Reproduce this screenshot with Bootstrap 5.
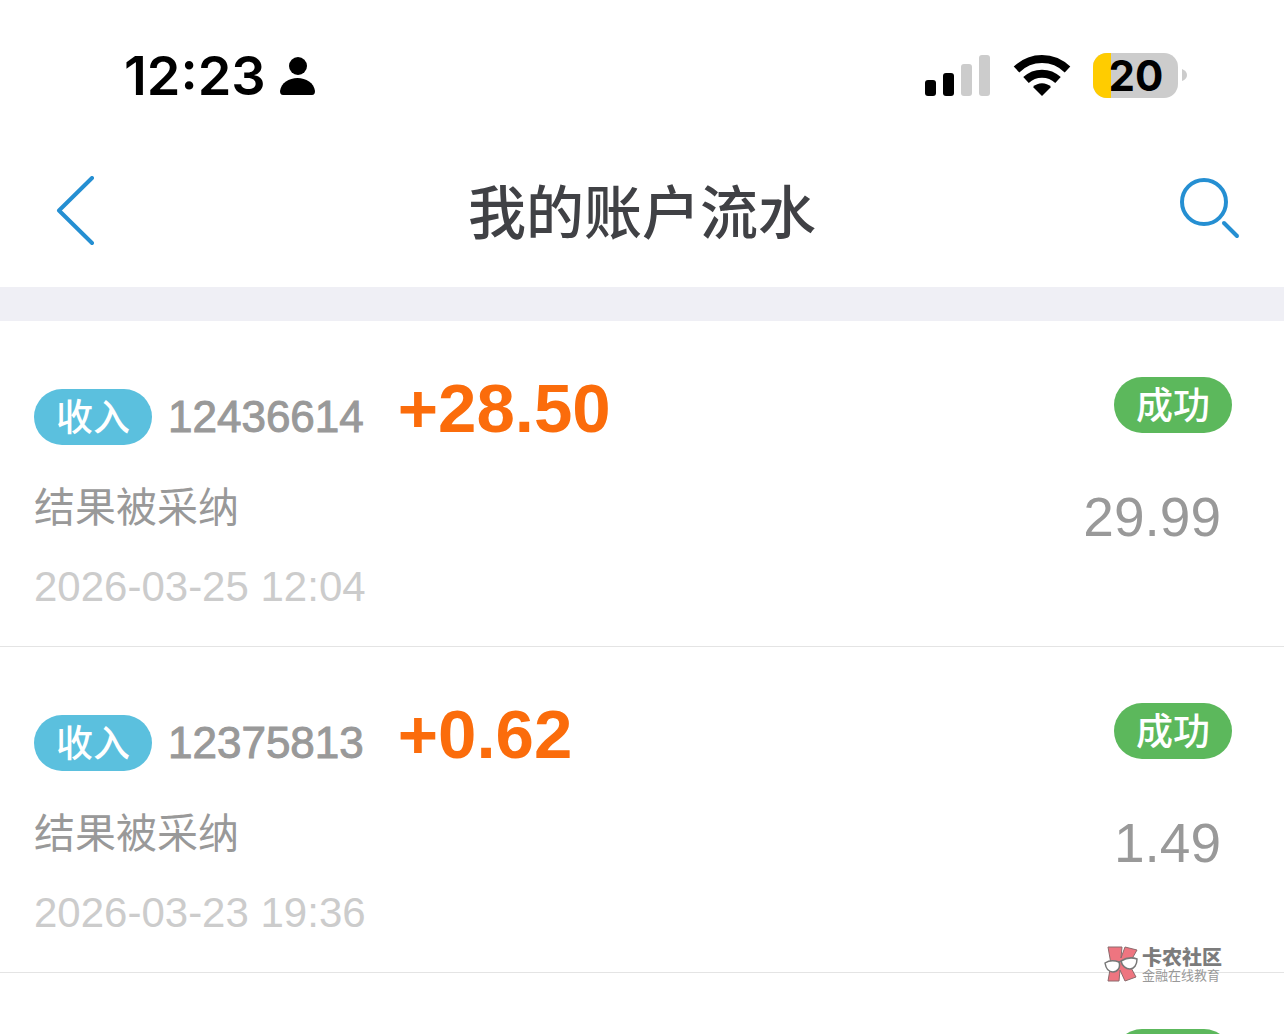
<!DOCTYPE html>
<html lang="zh-CN">
<head>
<meta charset="utf-8">
<meta name="viewport" content="width=device-width, initial-scale=1">
<title>我的账户流水</title>
<link href="https://cdn.jsdelivr.net/npm/bootstrap@5.3.0/dist/css/bootstrap.min.css" rel="stylesheet">
<style>
body{font-family:"Liberation Sans","Noto Sans CJK SC",sans-serif;background:#fff}
.status-bar{padding:48px 97px 33px 124px;height:137px;font-family:Inter,sans-serif;color:#000}
.clock{font-size:54px;line-height:56px;font-weight:600}
.clock-group{gap:13px}
.status-icons{gap:22px}
.battery{width:94px;height:46px}
.battery-level{font-size:42px;line-height:46px;font-weight:700;padding-right:8px}
.title-bar{padding:0 42px;height:150px}
.title-bar h1{font-size:58px;line-height:84px;padding-bottom:6px;font-weight:500;color:#404145;font-family:"Noto Sans CJK SC",sans-serif}
.tool{width:64px;height:72px}
.divider{height:34px;background:#efeff5}
.entry{padding:54px 52px 34px 34px;border-bottom:1px solid #e4e4e4}
.pill{width:118px;height:56px;line-height:53px;font-size:37px;font-weight:500;color:#fff;text-align:center;border-radius:28px;display:inline-block;font-family:"Noto Sans CJK SC",sans-serif}
.pill-in{background:#5bc0de}
.pill-ok{background:#5cb85c}
.kind{padding-top:14px;gap:16px}
.serial{font-size:44px;line-height:56px;color:#999;-webkit-text-stroke:1px #999}
.amount{font-size:69px;line-height:68px;font-weight:700;color:#fb6c0b;margin-left:34px}
.reason{font-size:41px;line-height:50px;color:#999;margin-top:34px;font-family:"Noto Sans CJK SC",sans-serif}
.stamp{font-size:42px;line-height:50px;color:#ccc;margin-top:33px}
.balance{font-size:55px;line-height:60px;color:#999;margin-top:54px;padding-right:11px}
.side{padding-top:2px}
.brand{right:62px;top:946px;gap:4px;color:#7c7c7c;font-family:"Noto Sans CJK SC",sans-serif}
.brand-name{font-size:20px;line-height:22px;font-weight:900}
.brand-tag{font-size:13px;line-height:14px;color:#999}
</style>
<script src="https://cdn.jsdelivr.net/npm/bootstrap@5.3.0/dist/js/bootstrap.bundle.min.js"></script>
</head>
<body>
<div class="position-relative vh-100 overflow-hidden d-flex flex-column">
<div class="status-bar flex-shrink-0 d-flex justify-content-between align-items-center">
  <div class="clock-group d-flex align-items-center">
    <span class="clock">12:23</span>
    <svg width="38" height="40" viewBox="0 0 38 40" aria-hidden="true"><circle cx="19" cy="10" r="9"/><path d="M4 39Q1 39 1 35C2 27 10 22 18.500 22S35 27 36 35Q36 39 33 39Z"/></svg>
  </div>
  <div class="status-icons d-flex align-items-center">
    <svg width="66" height="42" viewBox="0 0 66 42" aria-hidden="true"><rect y="25" width="11" height="16" rx="3"/><rect x="18" y="18" width="11" height="23" rx="3"/><g fill="#ccc"><rect x="36" y="9" width="11" height="32" rx="3"/><rect x="54" y="0" width="11" height="41" rx="3"/></g></svg>
    <svg width="58" height="42" viewBox="0 0 58 42" aria-hidden="true"><g fill="none" stroke="#000" stroke-width="8"><path d="M3.500 14.500C18 .5 40 .5 54.500 14.500"/><path d="M13 25C22 16.500 36 16.500 45 25"/></g><path d="M20 32C25 27 33 27 38 32L29 41Z"/></svg>
    <div class="battery position-relative d-flex justify-content-center">
      <svg class="position-absolute top-0 start-0" width="94" height="46" viewBox="0 0 94 46" aria-hidden="true"><rect y="0" width="85" height="45" rx="14" fill="#ccc"/><path d="M18 0H14A14 14 0 0 0 0 14V31A14 14 0 0 0 14 45H18Z" fill="#fc0"/><path d="M89 16Q94 18 94 22T89 28Z" fill="#ccc"/></svg>
      <span class="battery-level position-relative">20</span>
    </div>
  </div>
</div>
<header class="title-bar flex-shrink-0 d-flex justify-content-between align-items-center">
  <button type="button" class="tool btn p-0 border-0 d-flex" aria-label="返回"><svg width="64" height="72" viewBox="0 0 64 72" fill="none" stroke="#258fd2" stroke-width="4" stroke-linecap="round" stroke-linejoin="round"><path d="M50 2L17 34.500L50 67"/></svg></button>
  <h1 class="m-0">我的账户流水</h1>
  <button type="button" class="tool btn p-0 border-0 d-flex" aria-label="搜索"><svg width="64" height="72" viewBox="0 0 64 72" fill="none" stroke="#258fd2" stroke-width="4" stroke-linecap="round"><circle cx="26" cy="26" r="22"/><path d="M46 47L59 60"/></svg></button>
</header>
<div class="divider flex-shrink-0"></div>
<main class="flex-grow-1 overflow-hidden">
  <article class="entry d-flex justify-content-between">
    <div>
      <div class="d-flex align-items-start"><div class="kind d-flex"><span class="pill pill-in">收入</span><span class="serial">12436614</span></div><span class="amount">+28.50</span></div>
      <div class="reason">结果被采纳</div>
      <div class="stamp">2026-03-25 12:04</div>
    </div>
    <div class="side d-flex flex-column align-items-end"><span class="pill pill-ok">成功</span><div class="balance">29.99</div></div>
  </article>
  <article class="entry d-flex justify-content-between">
    <div>
      <div class="d-flex align-items-start"><div class="kind d-flex"><span class="pill pill-in">收入</span><span class="serial">12375813</span></div><span class="amount">+0.62</span></div>
      <div class="reason">结果被采纳</div>
      <div class="stamp">2026-03-23 19:36</div>
    </div>
    <div class="side d-flex flex-column align-items-end"><span class="pill pill-ok">成功</span><div class="balance">1.49</div></div>
  </article>
  <article class="entry d-flex justify-content-end">
    <div class="side"><span class="pill pill-ok"></span></div>
  </article>
</main>
<div class="brand position-absolute d-flex align-items-center">
  <svg width="34" height="36" viewBox="0 0 34 36" aria-hidden="true"><path fill="#ee7580" stroke="#8b6a6c" d="M4 1H18L17 12L21 1L33 4L25 18L32 31L21 35L16 24L15 35H4L7 18Z"/><g fill="#fff" stroke="#777" stroke-width="1.500"><path d="M1 17Q7 13 15 16C17 22 13 26 9 26S2 23 1 17Z"/><path d="M17 15Q25 10 33 13C33 19 30 23 26 23S18 20 17 15Z"/><path d="M15 17Q16 15 17 16"/></g></svg>
  <div><div class="brand-name">卡农社区</div><div class="brand-tag">金融在线教育</div></div>
</div>
</div>
</body>
</html>
